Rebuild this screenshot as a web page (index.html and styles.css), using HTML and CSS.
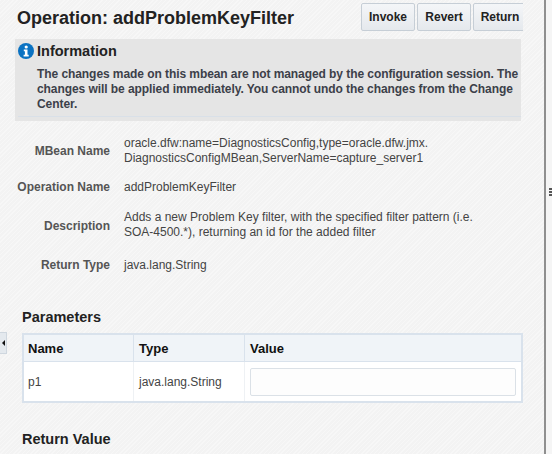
FILE: index.html
```html
<!DOCTYPE html>
<html lang="en">
<head>
    <meta charset="UTF-8">
    <title>Operation: addProblemKeyFilter</title>
    <link rel="stylesheet" href="styles.css">
</head>
<body>
    <div class="page">
        <div class="collapse-handle"><span class="collapse-arrow"></span></div>

        <main class="content">
            <header class="page-header">
                <h1>Operation: addProblemKeyFilter</h1>
                <div class="toolbar">
                    <button class="btn">Invoke</button>
                    <button class="btn">Revert</button>
                    <button class="btn btn-cut">Return</button>
                </div>
            </header>

            <section class="info-box">
                <h2>
                    <svg class="info-icon" width="16" height="16" viewBox="0 0 16 16">
                        <circle cx="8" cy="8" r="8" fill="#0a72c2"/>
                        <circle cx="8.2" cy="4" r="1.6" fill="#fff"/>
                        <path d="M5.8 6.6h3.7v5.2h1.2v1.6H5.6v-1.6h1.3V8.2H5.8z" fill="#fff"/>
                    </svg>
                    Information
                </h2>
                <p>The changes made on this mbean are not managed by the configuration session. The changes will be applied immediately. You cannot undo the changes from the Change Center.</p>
            </section>

            <dl class="details">
                <dt>MBean Name</dt>
                <dd>oracle.dfw:name=DiagnosticsConfig,type=oracle.dfw.jmx.<br>DiagnosticsConfigMBean,ServerName=capture_server1</dd>
                <dt>Operation Name</dt>
                <dd>addProblemKeyFilter</dd>
                <dt>Description</dt>
                <dd class="desc">Adds a new Problem Key filter, with the specified filter pattern (i.e.<br>SOA-4500.*), returning an id for the added filter</dd>
                <dt>Return Type</dt>
                <dd>java.lang.String</dd>
            </dl>

            <h3 class="section-title">Parameters</h3>
            <table class="params">
                <thead>
                    <tr>
                        <th class="col-name">Name</th>
                        <th class="col-type">Type</th>
                        <th>Value</th>
                    </tr>
                </thead>
                <tbody>
                    <tr>
                        <td>p1</td>
                        <td>java.lang.String</td>
                        <td><input type="text" class="value-input"></td>
                    </tr>
                </tbody>
            </table>

            <h3 class="section-title return-title">Return Value</h3>
        </main>

        <div class="splitter">
            <span class="grip"></span>
            <span class="grip"></span>
            <span class="grip"></span>
        </div>
    </div>
</body>
</html>
```
FILE: styles.css
```css
html, body {
    margin: 0;
    padding: 0;
    height: 100%;
    overflow: hidden;
}

body {
    font-family: 'Liberation Sans', Arial, sans-serif;
    font-size: 12px;
    color: #333;
    background-color: #f5f5f5;
}

.page {
    display: flex;
    height: 454px;
    position: relative;
}

.content {
    width: 546px;
    height: 454px;
    flex-shrink: 0;
    overflow: hidden;
    box-sizing: border-box;
    border-right: 2px solid #8f8f8f;
    padding: 0 0 0 15px;
    background-color: #f5f5f5;
    background-image: repeating-linear-gradient(135deg, #f7f7f7 0, #f7f7f7 1px, #f3f3f3 1px, #f3f3f3 3px);
}

.collapse-handle {
    position: absolute;
    left: 0;
    top: 332px;
    width: 7px;
    height: 22px;
    background-color: #e4e9ee;
    border: 1px solid #cfd7df;
    border-left: none;
    box-sizing: border-box;
}

.collapse-arrow {
    position: absolute;
    left: 2px;
    top: 7px;
    border-top: 3px solid transparent;
    border-bottom: 3px solid transparent;
    border-right: 3px solid #111;
}

.page-header {
    display: flex;
    justify-content: space-between;
    align-items: flex-start;
    height: 39px;
    width: 508px;
}

h1 {
    margin: 7px 0 0 2px;
    font-size: 18px;
    line-height: 22px;
    font-weight: bold;
    color: #222;
}

.toolbar {
    display: flex;
    gap: 2px;
    margin-top: 3px;
    width: 162px;
    overflow: hidden;
    flex-shrink: 0;
}

.btn {
    width: 54px;
    height: 28px;
    flex-shrink: 0;
    padding: 0;
    font-family: inherit;
    font-size: 12px;
    font-weight: bold;
    color: #222;
    background: linear-gradient(#f4f6f8, #e5e9ed);
    border: 1px solid #c6ced6;
    border-radius: 2px;
}

.btn-cut {
    width: 60px;
    padding-right: 6px;
}

.info-box {
    width: 506px;
    height: 82px;
    box-sizing: border-box;
    background-color: #e5e5e5;
    padding: 2px 0 0 3px;
}

.info-box h2 {
    display: flex;
    align-items: center;
    gap: 3px;
    margin: 0;
    height: 20px;
    font-size: 14.5px;
    font-weight: bold;
    color: #222;
}

.info-box p {
    margin: 6px 0 0 0;
    padding: 0 0 4px 19px;
    font-size: 12px;
    line-height: 15px;
    letter-spacing: -0.07px;
    font-weight: bold;
    color: #3c4049;
    border-bottom: 1px solid #d9e0e8;
}

.details {
    display: grid;
    grid-template-columns: 95px 1fr;
    column-gap: 14px;
    row-gap: 14px;
    align-items: center;
    width: 506px;
    margin: 15px 0 0 0;
    line-height: 15px;
    color: #444;
}

.details dt {
    text-align: right;
    font-weight: bold;
    color: #555;
}

.details dd {
    margin: 0;
}

.details dd.desc {
    padding: 1px 0 4px 0;
}

.section-title {
    margin: 35px 0 0 7px;
    font-size: 14.5px;
    line-height: 18px;
    font-weight: bold;
    color: #222;
}

.params {
    border-collapse: collapse;
    table-layout: fixed;
    width: 501px;
    margin: 7px 0 0 7px;
    background-color: #fff;
    border: 2px solid #d9e2ec;
}

.params th {
    height: 26px;
    padding: 0 5px;
    text-align: left;
    font-size: 13px;
    font-weight: bold;
    color: #111;
    background-color: #f0f4f8;
    border: 1px solid #d9e2ec;
}

.params td {
    height: 39px;
    padding: 0 5px;
    color: #444;
    border-right: 1px solid #eef1f4;
}

.params th:first-child,
.params td:first-child {
    padding-left: 4px;
}

.col-name {
    width: 100px;
}

.col-type {
    width: 100px;
}

.value-input {
    display: block;
    width: 100%;
    height: 28px;
    box-sizing: border-box;
    background-color: #fdfdfd;
    border: 1px solid #dbe1e7;
    border-radius: 2px;
}

.return-title {
    margin-top: 27px;
}

.splitter {
    display: flex;
    flex-direction: column;
    align-items: flex-end;
    width: 6px;
    height: 454px;
    padding-top: 187px;
    box-sizing: border-box;
}

.grip {
    width: 3px;
    height: 2px;
    margin-top: 1px;
    background-color: #555;
}
```
